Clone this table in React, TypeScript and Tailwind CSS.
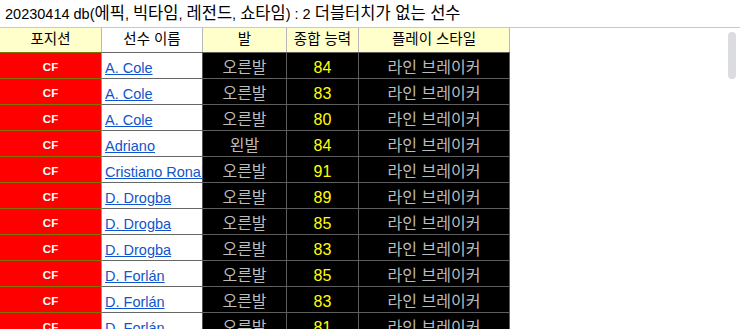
import React from "react";

const rows: { name: string; foot: string; ovr: number }[] = [
  { name: "A. Cole", foot: "오른발", ovr: 84 },
  { name: "A. Cole", foot: "오른발", ovr: 83 },
  { name: "A. Cole", foot: "오른발", ovr: 80 },
  { name: "Adriano", foot: "왼발", ovr: 84 },
  { name: "Cristiano Ronaldo", foot: "오른발", ovr: 91 },
  { name: "D. Drogba", foot: "오른발", ovr: 89 },
  { name: "D. Drogba", foot: "오른발", ovr: 85 },
  { name: "D. Drogba", foot: "오른발", ovr: 83 },
  { name: "D. Forlán", foot: "오른발", ovr: 85 },
  { name: "D. Forlán", foot: "오른발", ovr: 83 },
  { name: "D. Forlán", foot: "오른발", ovr: 81 },
];

export default function App() {
  return (
    <div
      className="relative w-[755px] bg-white text-black"
      style={{ fontFamily: '"Liberation Sans", "Noto Sans CJK KR", Arial, sans-serif' }}
    >
      <div className="h-[28px] w-[740px] border-b border-[#c8c8c8] pl-[5px] pt-[5px] text-[14.5px] leading-[17px] whitespace-nowrap">
        20230414 db(<span className="text-[16.5px]">에픽</span>, <span className="text-[16.5px]">빅타임</span>,{" "}
        <span className="text-[16.5px]">레전드</span>, <span className="text-[16.5px]">쇼타임</span>) : 2{" "}
        <span className="text-[16.5px]">더블터치가 없는 선수</span>
      </div>
      <div className="flex h-[24px] text-[14.5px] leading-[17px]">
        <div className="flex w-[102px] items-end justify-center border-r border-[#b8b8b8] bg-[#ffffcc] pb-[4px]">포지션</div>
        <div className="flex w-[101px] items-end justify-center border-r border-[#b8b8b8] bg-white pb-[4px]">선수 이름</div>
        <div className="flex w-[84px] items-end justify-center border-r border-[#b8b8b8] bg-[#ffffcc] pb-[4px]">발</div>
        <div className="flex w-[72px] items-end justify-center border-r border-[#b8b8b8] bg-[#ffffcc] pb-[4px]">종합 능력</div>
        <div className="flex w-[151px] items-end justify-center border-r border-[#b8b8b8] bg-[#ffffcc] pb-[4px]">플레이 스타일</div>
      </div>
      {rows.map((r, i) => (
        <div key={i} className="flex h-[26px] leading-[17px]">
          <div className="flex w-[102px] items-end justify-center border-t border-r border-t-[#7f7300] border-r-[#9a9a9a] bg-[#ff0000] pb-[2px] text-[11.5px] font-bold text-white">
            CF
          </div>
          <div className="flex w-[101px] items-end overflow-hidden whitespace-nowrap border-t border-r border-t-[#666666] border-r-[#555555] bg-white pb-[1px] pl-[3px] text-[14.5px]">
            <a href="#" className="text-[#1155cc] underline">
              {r.name}
            </a>
          </div>
          <div className="flex w-[84px] items-end justify-center border-t border-r border-[#5e5e5e] bg-black pb-[2px] text-[16px] text-[#bcbcbc]">
            {r.foot}
          </div>
          <div className="flex w-[72px] items-end justify-center border-t border-r border-[#5e5e5e] bg-black pb-[2px] text-[16px] text-[#ffff00]">
            {r.ovr}
          </div>
          <div className="flex w-[151px] items-end justify-center border-t border-r border-[#5e5e5e] bg-black pb-[2px] text-[16px] text-[#bcbcbc]">
            라인 브레이커
          </div>
        </div>
      ))}
      <div className="absolute left-[728px] top-[32px] h-[47px] w-[8px] rounded-full bg-[#dadce0]" />
    </div>
  );
}
